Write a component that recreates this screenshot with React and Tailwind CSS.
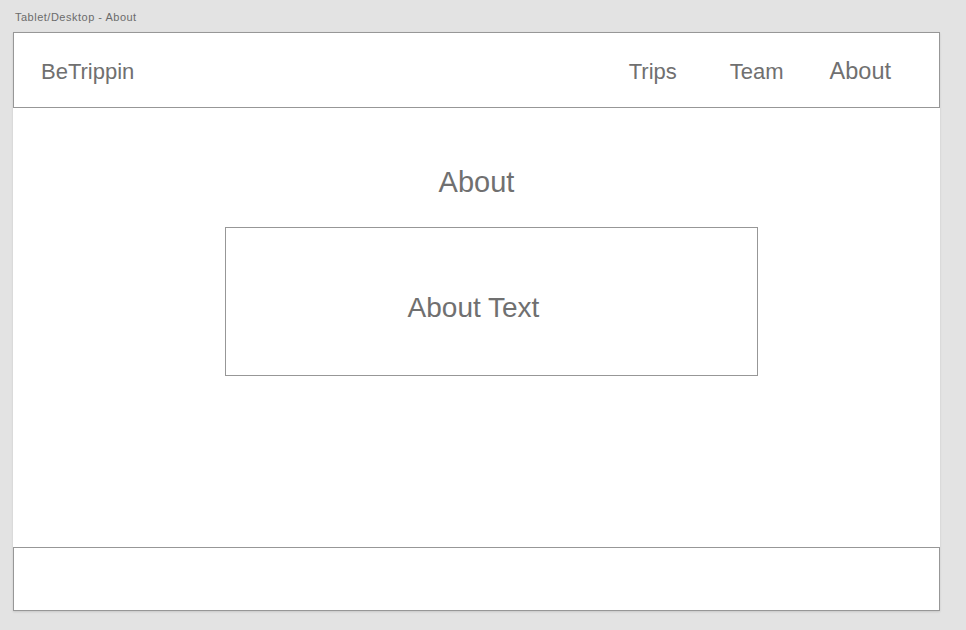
export default function App() {
    return (
        <div className="w-[966px] h-[630px] bg-[#e3e3e3] font-['Liberation_Sans',Arial,sans-serif] text-[#707070] overflow-hidden">
            <div className="pt-[12px] pl-[15px] text-[11px] leading-none tracking-[0.5px] text-[#6b6b6b]">
                Tablet/Desktop - About
            </div>

            <div className="ml-[13px] mt-[9px] w-[927px] h-[579px] bg-white flex flex-col shadow-[0_1px_2px_rgba(0,0,0,0.12)]">
                {/* header */}
                <header className="h-[76px] shrink-0 border border-[#979797] pt-[3px] flex items-center justify-between">
                    <div className="pl-[27px] text-[22px] leading-none">BeTrippin</div>
                    <nav className="flex items-center pr-[48px] text-[22px] leading-none">
                        <a href="#">Trips</a>
                        <a href="#" className="ml-[53px]">Team</a>
                        <a href="#" className="ml-[46px] text-[23.5px]">About</a>
                    </nav>
                </header>

                {/* content */}
                <main className="flex-1">
                    <h1 className="mt-[60px] text-center text-[29px] leading-none">About</h1>
                    <div className="mt-[30px] ml-[212px] w-[533px] h-[149px] border border-[#979797] pt-[66px] pr-[36px] text-center text-[28px] leading-none">
                        About Text
                    </div>
                </main>

                {/* footer */}
                <footer className="h-[64px] shrink-0 border border-[#979797]" />
            </div>
        </div>
    );
}
